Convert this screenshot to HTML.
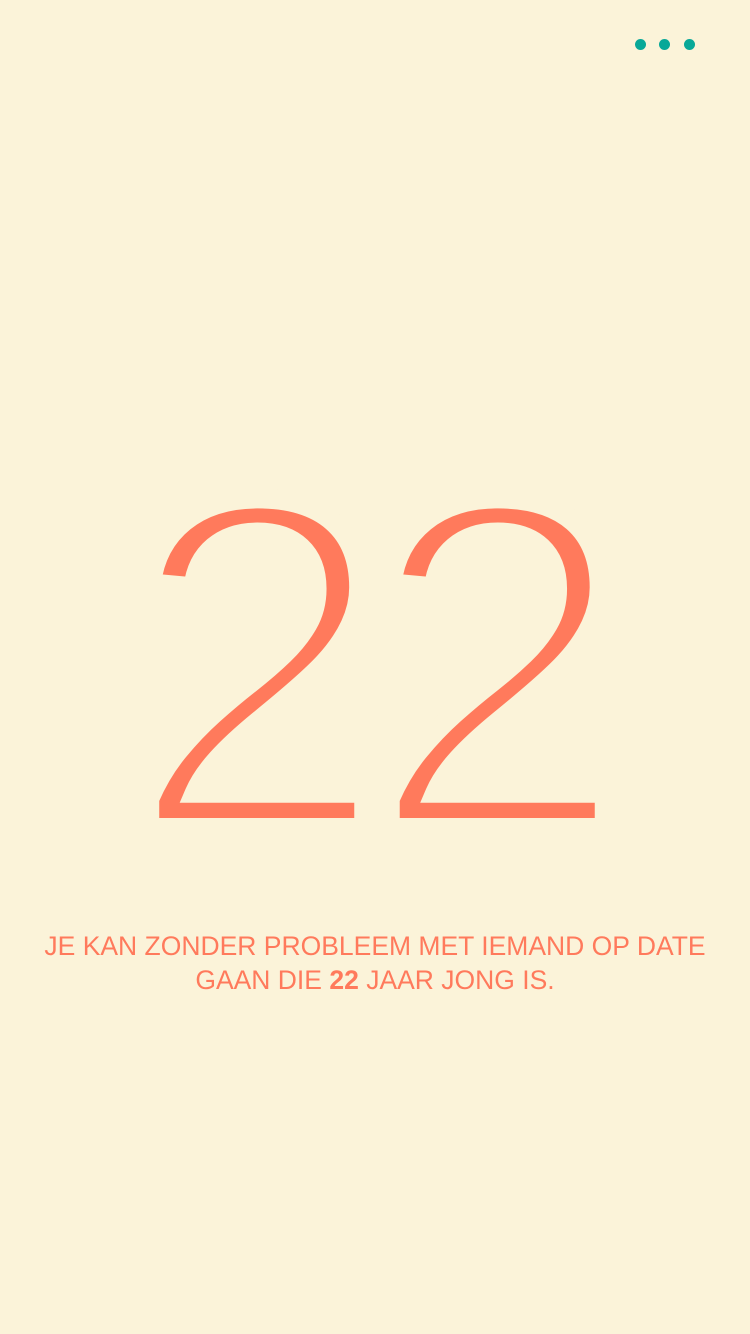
<!DOCTYPE html>
<html><head><meta charset="utf-8"><style>
html,body{margin:0;padding:0;}
body{width:750px;height:1334px;background:#FBF3D9;position:relative;overflow:hidden;font-family:"Liberation Sans",sans-serif;}
.dot{position:absolute;top:39px;width:11px;height:11px;border-radius:50%;background:#08A898;}
.big{position:absolute;left:0;width:750px;top:416px;text-align:center;font-size:472px;line-height:500px;color:#FF7A5C;-webkit-text-stroke:20px #FBF3D9;letter-spacing:-22px;text-indent:-18px;white-space:nowrap;}
.txt{position:absolute;left:0;width:750px;top:929px;text-align:center;font-size:26.5px;line-height:34px;color:#FF7A5C;white-space:nowrap;}
</style></head><body>
<div class="dot" style="left:635px"></div>
<div class="dot" style="left:659px"></div>
<div class="dot" style="left:684px"></div>
<div class="big">22</div>
<div class="txt">JE KAN ZONDER PROBLEEM MET IEMAND OP DATE<br>GAAN DIE <b>22</b> JAAR JONG IS.</div>
</body></html>
